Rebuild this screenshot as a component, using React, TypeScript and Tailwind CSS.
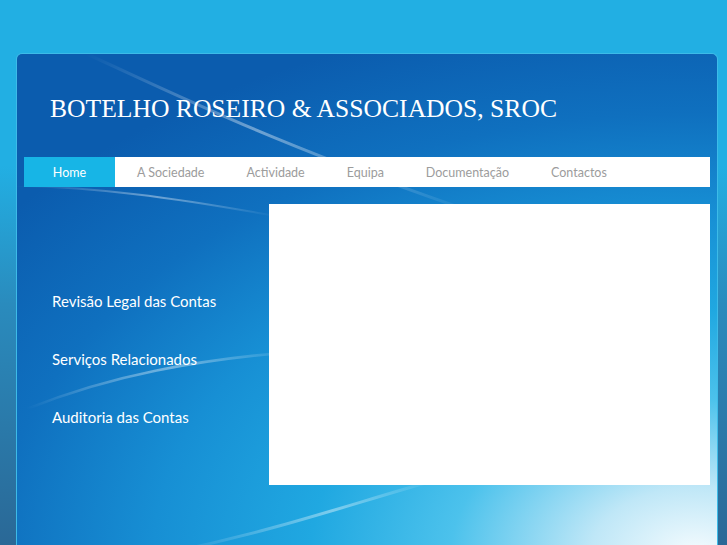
import React from "react";

const navItems = ["Home", "A Sociedade", "Actividade", "Equipa", "Documentação", "Contactos"];
const services = ["Revisão Legal das Contas", "Serviços Relacionados", "Auditoria das Contas"];

function Swooshes() {
  return (
    <svg
      className="pointer-events-none absolute inset-0 h-full w-full"
      viewBox="0 0 702 492"
      preserveAspectRatio="none"
      aria-hidden="true"
    >
      <defs>
        <linearGradient id="streak" x1="0" y1="0" x2="1" y2="1">
          <stop offset="0" stopColor="#ffffff" stopOpacity="0" />
          <stop offset="0.45" stopColor="#ffffff" stopOpacity="0.4" />
          <stop offset="1" stopColor="#ffffff" stopOpacity="0" />
        </linearGradient>
        <linearGradient id="streak2" x1="0" y1="1" x2="1" y2="0">
          <stop offset="0" stopColor="#ffffff" stopOpacity="0" />
          <stop offset="0.6" stopColor="#ffffff" stopOpacity="0.4" />
          <stop offset="1" stopColor="#ffffff" stopOpacity="0" />
        </linearGradient>
      </defs>
      <path d="M70 0 C160 40 260 90 470 160" stroke="url(#streak)" strokeWidth="3" fill="none" />
      <path d="M0 130 C80 132 150 140 260 160" stroke="url(#streak)" strokeWidth="2" fill="none" />
      <path d="M10 350 C90 318 180 300 300 292" stroke="url(#streak2)" strokeWidth="2.5" fill="none" />
      <path d="M150 492 C260 470 330 445 420 420" stroke="url(#streak2)" strokeWidth="3" fill="none" />
    </svg>
  );
}

export default function App() {
  return (
    <div className="min-h-[545px] w-full overflow-hidden bg-[linear-gradient(to_bottom,#22afe3_0%,#22afe3_30%,#2a8bbd_55%,#2a6795_100%)] pt-[53px]">
      <div className="relative ml-[16px] h-[500px] w-[702px] overflow-hidden rounded-t-[6px] border border-b-0 border-[#3dbbe8] bg-[radial-gradient(ellipse_125%_110%_at_97%_100%,#f4fbfe_0%,#bfe7f7_12%,#4cc2ec_28%,#20a8e1_44%,#178fd4_62%,#0f70bf_80%,#0b5cae_100%)]">
        <Swooshes />

        <div className="relative">
          <h1
            className="pl-[33px] pt-[40px] text-[25.6px] leading-[30px] text-white"
            style={{ fontFamily: '"Liberation Serif", "DejaVu Serif", serif' }}
          >
            BOTELHO ROSEIRO &amp; ASSOCIADOS, SROC
          </h1>

          <nav
            className="mx-[7px] mt-[33px] flex h-[30px] items-stretch bg-white pt-[3px] text-[12.5px]"
            style={{ fontFamily: 'Lato, "Open Sans", sans-serif' }}
          >
            {navItems.map((item, i) => (
              <a
                key={item}
                href="#"
                className={
                  i === 0
                    ? "-mt-[3px] mr-[1px] flex w-[91px] items-center justify-center bg-[#17b5e6] pt-[3px] text-white"
                    : "flex items-center px-[21px] text-[#9c9c9c]"
                }
              >
                {item}
              </a>
            ))}
          </nav>

          <div className="mt-[17px] flex">
            <ul
              className="flex w-[252px] flex-col gap-[39px] pl-[35px] pt-[88px] text-[15px] leading-[19px] text-white"
              style={{ fontFamily: 'Lato, "Open Sans", sans-serif' }}
            >
              {services.map((s) => (
                <li key={s}>{s}</li>
              ))}
            </ul>
            <div className="h-[281px] w-[441px] bg-white" />
          </div>
        </div>
      </div>
    </div>
  );
}
